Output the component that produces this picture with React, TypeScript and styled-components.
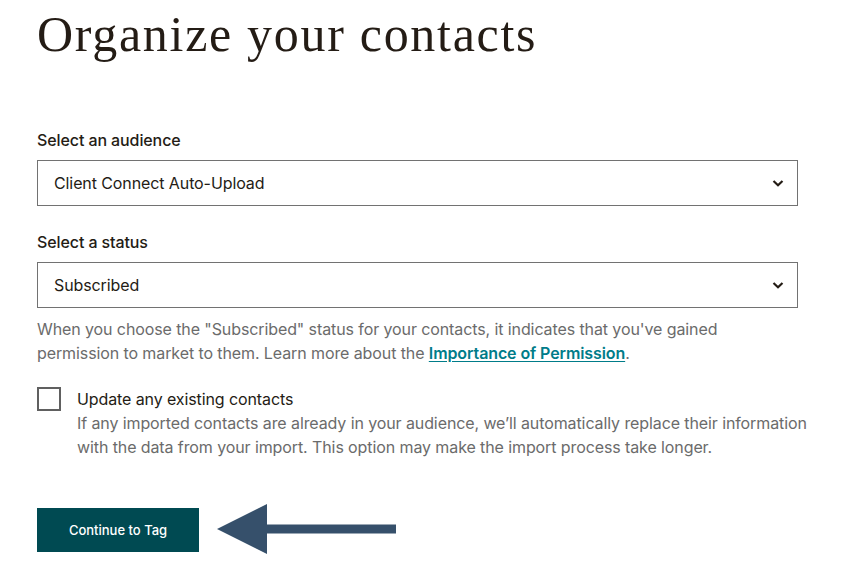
import React from "react";
import styled, { createGlobalStyle } from "styled-components";

const Global = createGlobalStyle`
  html, body { margin: 0; padding: 0; background: #fff; }
  body { font-family: "Inter", "Roboto", "Liberation Sans", sans-serif; color: #241c15; letter-spacing: -0.1px; }
  * { box-sizing: border-box; }
`;

const Page = styled.div`
  padding: 0 0 0 37px;
  width: 861px;
  height: 588px;
  overflow: hidden;
`;

const Title = styled.h1`
  margin: 0;
  padding-top: 2px;
  font-family: "Liberation Serif", serif;
  font-weight: 400;
  font-size: 50px;
  line-height: 64px;
  letter-spacing: 1.7px;
  color: #241c15;
`;

const Form = styled.div`
  display: flex;
  flex-direction: column;
  margin-top: 62px;
`;

const Field = styled.div<{ $gap?: number }>`
  display: flex;
  flex-direction: column;
  margin-bottom: ${(p) => p.$gap ?? 0}px;
`;

const Label = styled.label`
  font-size: 16px;
  line-height: 24px;
  font-weight: 500;
  color: #241c15;
  margin-bottom: 8px;
`;

const SelectBox = styled.div`
  width: 761px;
  height: 46px;
  border: 1px solid #727272;
  display: flex;
  align-items: center;
  justify-content: space-between;
  padding: 0 12px 0 16px;
  font-size: 16px;
  color: #241c15;
`;

const Help = styled.p`
  margin: 9px 0 0;
  width: 761px;
  font-size: 16px;
  line-height: 24px;
  color: #6b6b6b;
`;

const Link = styled.a`
  color: #007c89;
  font-weight: 600;
  text-decoration: underline;
  text-underline-offset: 2px;
`;

const CheckRow = styled.div`
  display: flex;
  align-items: flex-start;
  gap: 16px;
  margin-top: 22px;
`;

const Box = styled.div`
  width: 24px;
  height: 24px;
  border: 2px solid #606060;
  flex-shrink: 0;
`;

const CheckText = styled.div`
  display: flex;
  flex-direction: column;
  font-size: 16px;
  line-height: 24px;
`;

const CheckLabel = styled.span`
  color: #241c15;
`;

const CheckDesc = styled.span`
  color: #6b6b6b;
`;

const ActionRow = styled.div`
  display: flex;
  align-items: center;
  gap: 18px;
  margin-top: 45px;
`;

const Button = styled.button`
  width: 162px;
  height: 44px;
  border: none;
  background: #004a52;
  color: #fff;
  font-family: "Inter", "Roboto", "Liberation Sans", sans-serif;
  font-size: 13px;
  font-weight: 500;
  cursor: pointer;
`;

const Chevron = () => (
  <svg width="14" height="14" viewBox="0 0 14 14" fill="none">
    <path d="M2.5 5 L7 9.2 L11.5 5" stroke="#241c15" strokeWidth="2.2" strokeLinecap="butt" strokeLinejoin="miter" />
  </svg>
);

const Arrow = () => (
  <svg width="180" height="52" viewBox="0 0 180 52">
    <polygon points="0,25 50,0 50,50" fill="#36506b" />
    <rect x="49" y="20.5" width="130" height="9" fill="#36506b" />
  </svg>
);

export default function App() {
  return (
    <>
      <Global />
      <Page>
        <Title>Organize your contacts</Title>
        <Form>
          <Field $gap={24}>
            <Label>Select an audience</Label>
            <SelectBox>
              <span>Client Connect Auto-Upload</span>
              <Chevron />
            </SelectBox>
          </Field>
          <Field>
            <Label>Select a status</Label>
            <SelectBox>
              <span>Subscribed</span>
              <Chevron />
            </SelectBox>
          </Field>
          <Help>
            When you choose the "Subscribed" status for your contacts, it indicates that you've gained
            <br />
            permission to market to them. Learn more about the <Link href="#">Importance of Permission</Link>.
          </Help>
          <CheckRow>
            <Box />
            <CheckText>
              <CheckLabel>Update any existing contacts</CheckLabel>
              <CheckDesc>
                If any imported contacts are already in your audience, we’ll automatically replace their information
                <br />
                with the data from your import. This option may make the import process take longer.
              </CheckDesc>
            </CheckText>
          </CheckRow>
          <ActionRow>
            <Button>Continue to Tag</Button>
            <Arrow />
          </ActionRow>
        </Form>
      </Page>
    </>
  );
}
